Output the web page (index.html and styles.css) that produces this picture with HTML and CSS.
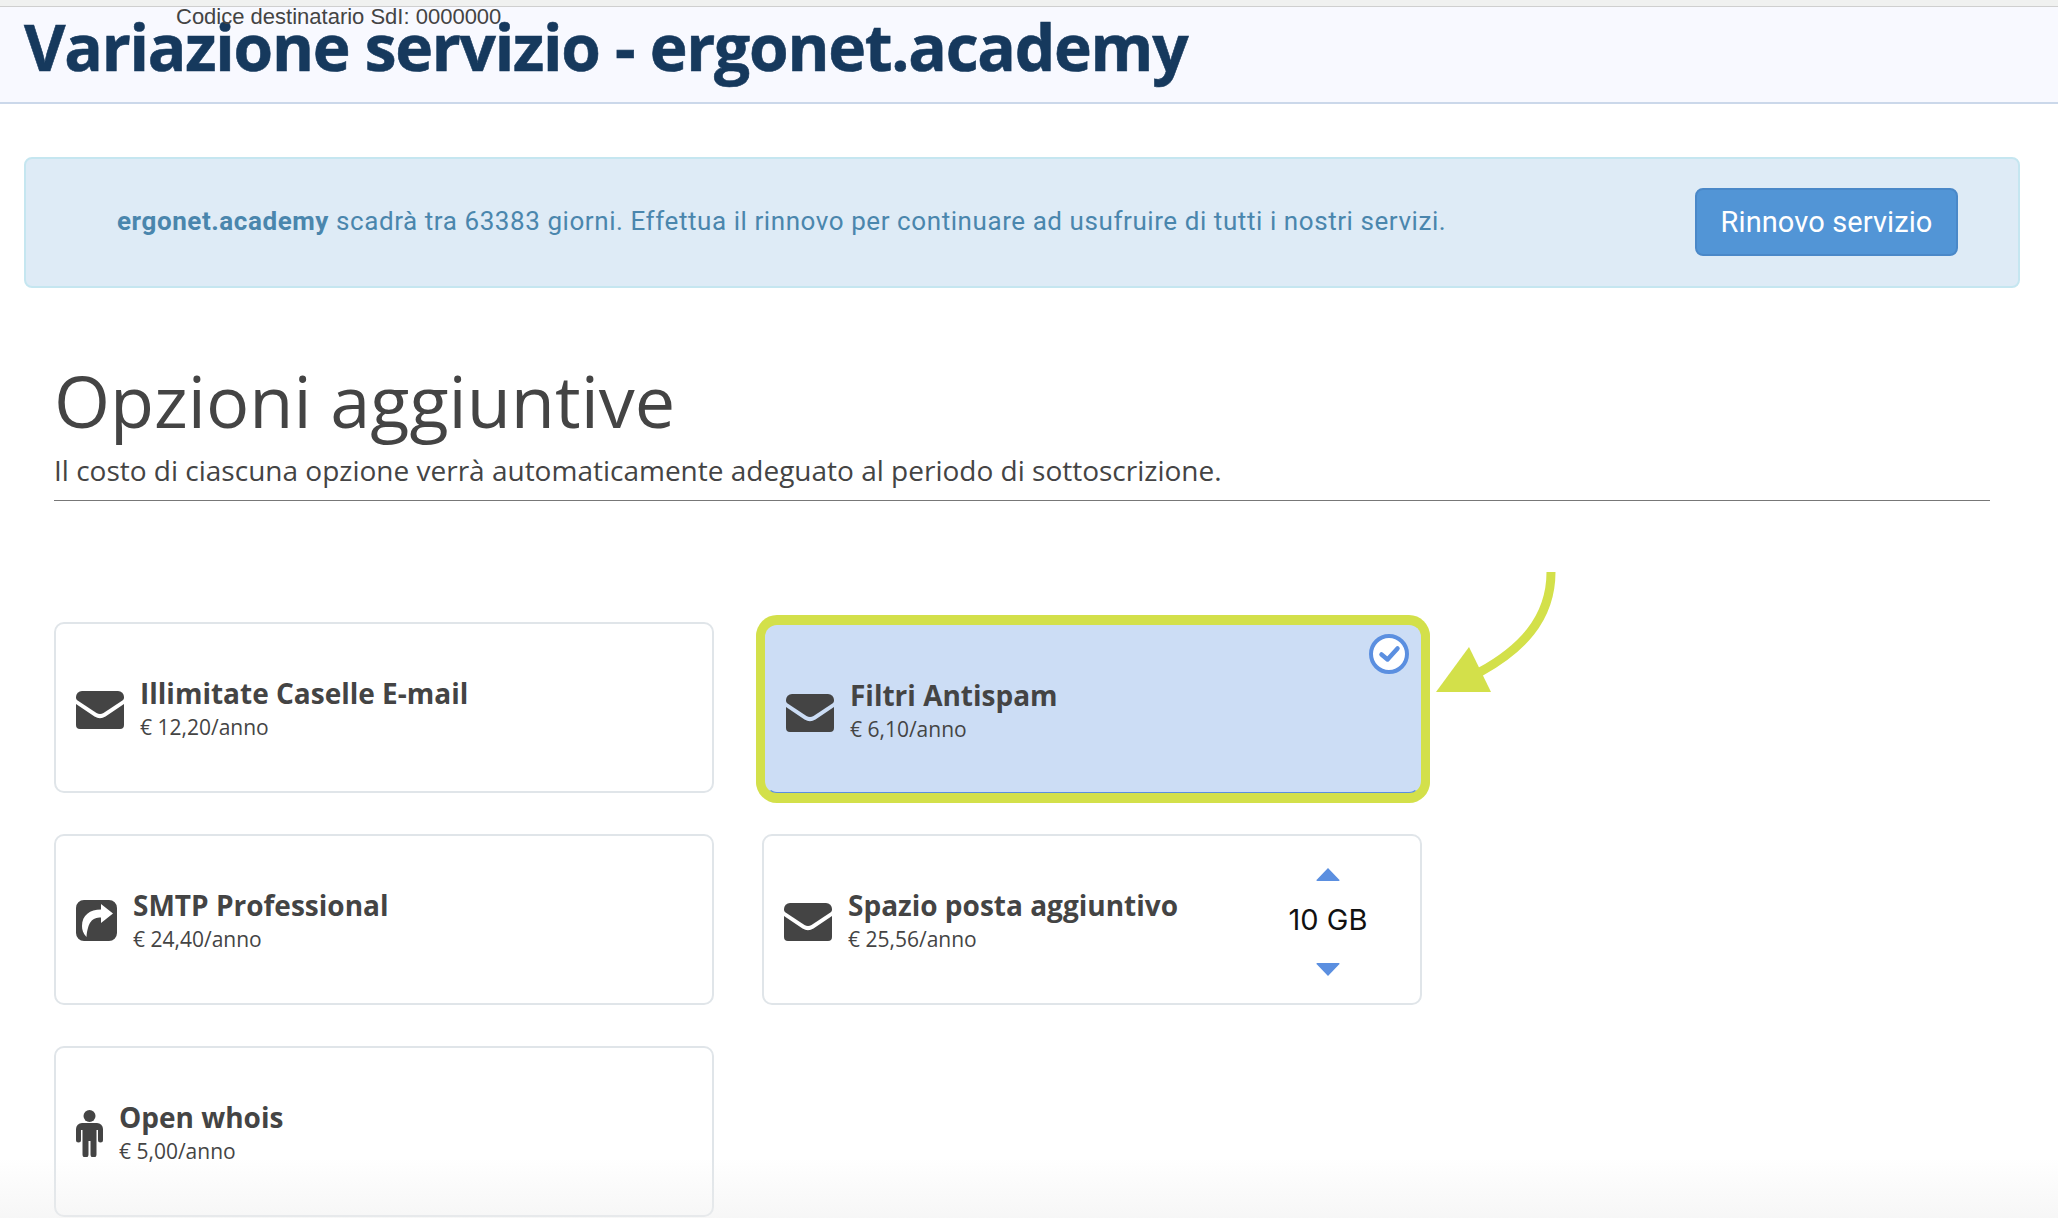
FILE: index.html
```html
<!DOCTYPE html>
<html lang="it">
<head>
<meta charset="utf-8">
<title>Variazione servizio - ergonet.academy</title>
<link rel="stylesheet" href="styles.css">
</head>
<body>
<div class="topbar"></div>
<header class="page-header">
  <h1 class="page-title">Variazione servizio - ergonet.academy</h1>
  <div class="sdi">Codice destinatario SdI: 0000000</div>
</header>
<main>
  <section class="alert">
    <p class="alert-text"><strong>ergonet.academy</strong> scadrà tra 63383 giorni. Effettua il rinnovo per continuare ad usufruire di tutti i nostri servizi.</p>
    <a class="btn">Rinnovo servizio</a>
  </section>
  <section class="options">
    <h2 class="options-title">Opzioni aggiuntive</h2>
    <p class="options-sub">Il costo di ciascuna opzione verrà automaticamente adeguato al periodo di sottoscrizione.</p>
    <div class="grid">
      <article class="card">
        <svg class="ico ico-mail" viewBox="0 0 48 38"><path d="M6 0h36a6 6 0 0 1 6 6v.500c0 1.200-.6 2.300-1.600 3L27.500 22a6.500 6.500 0 0 1-7 0L1.600 9.500C.6 8.800 0 7.700 0 6.500V6a6 6 0 0 1 6-6z"/><path d="M0 13 18.500 25.500a10 10 0 0 0 11 0L48 13v21a4 4 0 0 1-4 4H4a4 4 0 0 1-4-4z"/></svg>
        <div class="info"><div class="name">Illimitate Caselle E-mail</div><div class="price">€ 12,20/anno</div></div>
      </article>
      <article class="card selected">
        <svg class="ico ico-mail" viewBox="0 0 48 38"><path d="M6 0h36a6 6 0 0 1 6 6v.500c0 1.200-.6 2.300-1.600 3L27.500 22a6.500 6.500 0 0 1-7 0L1.600 9.500C.6 8.800 0 7.700 0 6.500V6a6 6 0 0 1 6-6z"/><path d="M0 13 18.500 25.500a10 10 0 0 0 11 0L48 13v21a4 4 0 0 1-4 4H4a4 4 0 0 1-4-4z"/></svg>
        <div class="info"><div class="name">Filtri Antispam</div><div class="price">€ 6,10/anno</div></div>
        <svg class="check" viewBox="0 0 40 40"><circle cx="20" cy="20" r="18" fill="#fff" stroke="#5b8fe0" stroke-width="4"/><path d="M12.500 20.500l6 5 10-11" fill="none" stroke="#5b8fe0" stroke-width="4.500" stroke-linecap="round" stroke-linejoin="round"/></svg>
      </article>
      <article class="card">
        <svg class="ico ico-share" viewBox="0 0 41 41"><path fill-rule="evenodd" d="M8 0h25a8 8 0 0 1 8 8v25a8 8 0 0 1-8 8H8a8 8 0 0 1-8-8V8a8 8 0 0 1 8-8zM25 4v5.500C14 9.500 6 15 6 26c0 4 1 7 4.500 11C12 22 16 17.500 25 17.500V23l12-9.500z"/></svg>
        <div class="info"><div class="name">SMTP Professional</div><div class="price">€ 24,40/anno</div></div>
      </article>
      <article class="card">
        <svg class="ico ico-mail" viewBox="0 0 48 38"><path d="M6 0h36a6 6 0 0 1 6 6v.500c0 1.200-.6 2.300-1.600 3L27.500 22a6.500 6.500 0 0 1-7 0L1.600 9.500C.6 8.800 0 7.700 0 6.500V6a6 6 0 0 1 6-6z"/><path d="M0 13 18.500 25.500a10 10 0 0 0 11 0L48 13v21a4 4 0 0 1-4 4H4a4 4 0 0 1-4-4z"/></svg>
        <div class="info"><div class="name">Spazio posta aggiuntivo</div><div class="price">€ 25,56/anno</div></div>
        <div class="stepper">
          <svg class="caret" viewBox="0 0 24 14"><path d="M12 1 23 12.500a.8 .8 0 0 1-.6 1.500H1.600a.8 .8 0 0 1-.6-1.500z"/></svg>
          <div class="qty">10 GB</div>
          <svg class="caret" viewBox="0 0 24 14"><path d="M12 13 23 1.500a.8 .8 0 0 0-.6-1.500H1.600a.8 .8 0 0 0-.6 1.500z"/></svg>
        </div>
      </article>
      <article class="card">
        <svg class="ico ico-person" viewBox="0 0 27 47"><circle cx="13.500" cy="6" r="6"/><path d="M6 13h15a6 6 0 0 1 6 6v11a2.500 2.500 0 0 1-5 0V20h-1.500v24.500a3 3 0 0 1-6 0V31h-2v13.500a3 3 0 0 1-6 0V20H5v10a2.500 2.500 0 0 1-5 0V19a6 6 0 0 1 6-6z"/></svg>
        <div class="info"><div class="name">Open whois</div><div class="price">€ 5,00/anno</div></div>
      </article>
    </div>
  </section>
</main>
<svg class="arrow" viewBox="0 0 130 130"><path d="M121 2C121 50 90 80 50 102" fill="none" stroke="#d3e04a" stroke-width="9"/><path d="M39 77 6 122H61z" fill="#d3e04a"/></svg>
<div class="fade"></div>
</body>
</html>
```
FILE: styles.css
```css
* { box-sizing: border-box; }
html, body { margin: 0; padding: 0; }
body {
  position: relative;
  width: 2058px;
  height: 1218px;
  overflow: hidden;
  background: #fff;
  font-family: "Open Sans", sans-serif;
  color: #444;
}
.topbar {
  height: 7px;
  background: #f0f1f0;
  border-bottom: 1px solid #cfcfcf;
}
.page-header {
  position: relative;
  height: 97px;
  padding-left: 24px;
  background: #f8f9ff;
  border-bottom: 2px solid #cbd8ea;
}
.page-title {
  margin: 0;
  font-size: 64px;
  line-height: 80px;
  font-weight: 700;
  letter-spacing: -1.250px;
  -webkit-text-stroke: .6px #16395d;
  color: #16395d;
  white-space: nowrap;
}
.sdi {
  position: absolute;
  left: 176px;
  top: -2px;
  font-family: "Liberation Sans", sans-serif;
  font-size: 22px;
  line-height: 24px;
  color: #444;
}
.alert {
  display: flex;
  align-items: center;
  justify-content: space-between;
  width: 1996px;
  height: 131px;
  margin: 53px 0 0 24px;
  padding: 0 60px 0 91px;
  background: #deebf6;
  border: 2px solid #c5e6f0;
  border-radius: 8px;
}
.alert-text {
  margin: 0 0 4px;
  font-family: Roboto, sans-serif;
  font-size: 26px;
  letter-spacing: .57px;
  color: #4a86ad;
}
.btn {
  display: flex;
  align-items: center;
  justify-content: center;
  width: 263px;
  height: 68px;
  margin-bottom: 1px;
  background: #5295d6;
  border: 2px solid #4a88c8;
  border-radius: 8px;
  font-family: Roboto, sans-serif;
  font-size: 29px;
  letter-spacing: .1px;
  color: #fff;
}
.options { padding: 0 68px 0 54px; }
.options-title {
  margin: 67px 0 0;
  font-size: 72px;
  line-height: 90px;
  font-weight: 400;
  color: #444;
}
.options-sub {
  margin: 5px 0 0;
  padding-bottom: 10px;
  font-size: 28px;
  line-height: 40px;
  border-bottom: 1px solid #777;
}
.grid {
  display: grid;
  grid-template-columns: 660px 660px;
  grid-auto-rows: 171px;
  column-gap: 48px;
  row-gap: 41px;
  margin-top: 121px;
}
.card {
  position: relative;
  display: flex;
  align-items: center;
  gap: 16px;
  padding: 0 20px;
  background: #fff;
  border: 2px solid #e0e5e9;
  border-radius: 10px;
}
.card.selected {
  width: 656px;
  margin: 3px 0 0 3px;
  padding: 0 19px;
  background: #ccddf5;
  border-color: #ccddf5;
  border-bottom: 1px solid #5b8fe0;
  border-radius: 12px;
  box-shadow: 0 1px 0 9px #d3e04a, 0 -1px 0 9px #d3e04a;
}
.ico { flex: none; fill: #444; }
.ico-mail { width: 48px; height: 38px; margin-top: 4px; }
.selected .ico-mail { margin-top: 6px; }
.ico-share { width: 41px; height: 41px; margin-top: 1px; }
.ico-person { width: 27px; height: 47px; margin-top: 3px; }
.info { flex: 1; padding-top: 2px; }
.name { font-size: 28px; line-height: 34px; font-weight: 700; color: #444; }
.price { margin-top: 2px; font-size: 21px; line-height: 30px; color: #444; }
.check {
  position: absolute;
  top: 7px;
  right: 10px;
  width: 40px;
  height: 40px;
}
.stepper {
  display: flex;
  flex-direction: column;
  align-items: center;
  width: 100px;
  margin: 4px 22px 0 0;
}
.caret { width: 24px; height: 14px; fill: #5b8fe0; }
.qty { margin: 21px 0 25px; font-family: Inter, sans-serif; font-size: 29px; line-height: 36px; color: #111; }
.arrow {
  position: absolute;
  left: 1430px;
  top: 570px;
  width: 130px;
  height: 130px;
}
.fade {
  position: absolute;
  left: 0;
  right: 0;
  bottom: 0;
  height: 60px;
  background: linear-gradient(to bottom, rgba(238,238,238,0), rgba(238,238,238,.5));
  pointer-events: none;
}
```
